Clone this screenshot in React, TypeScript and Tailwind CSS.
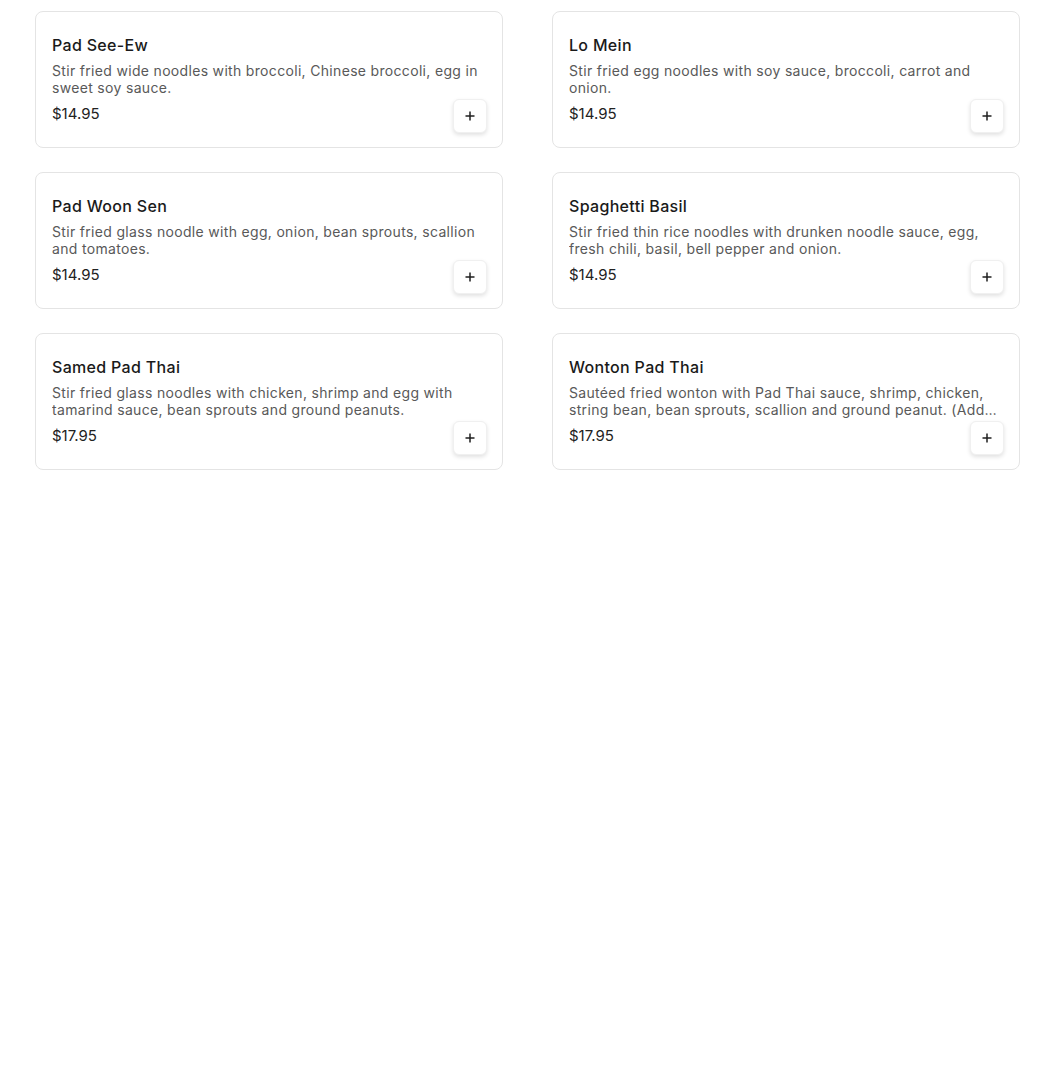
import React from "react";

const items = [
  { name: "Pad See-Ew", desc: "Stir fried wide noodles with broccoli, Chinese broccoli, egg in sweet soy sauce.", price: "$14.95" },
  { name: "Lo Mein", desc: "Stir fried egg noodles with soy sauce, broccoli, carrot and onion.", price: "$14.95" },
  { name: "Pad Woon Sen", desc: "Stir fried glass noodle with egg, onion, bean sprouts, scallion and tomatoes.", price: "$14.95" },
  { name: "Spaghetti Basil", desc: "Stir fried thin rice noodles with drunken noodle sauce, egg, fresh chili, basil, bell pepper and onion.", price: "$14.95" },
  { name: "Samed Pad Thai", desc: "Stir fried glass noodles with chicken, shrimp and egg with tamarind sauce, bean sprouts and ground peanuts.", price: "$17.95" },
  { name: "Wonton Pad Thai", desc: "Sautéed fried wonton with Pad Thai sauce, shrimp, chicken, string bean, bean sprouts, scallion and ground peanut. (Add Egg Extra)", price: "$17.95" },
];

function PlusIcon() {
  return (
    <svg width="12" height="12" viewBox="0 0 12 12" fill="none">
      <path d="M6 1.5v9M1.5 6h9" stroke="#1f1f1f" strokeWidth="1.5" strokeLinecap="butt" />
    </svg>
  );
}

export default function App() {
  return (
    <div className="min-h-[1083px] bg-white tracking-[0.02em]" style={{ fontFamily: "Inter, 'Open Sans', sans-serif" }}>
      <div className="ml-[35px] pt-[11px] w-[985px] grid grid-cols-2 gap-x-[49px] gap-y-[24px]">
        {items.map((it) => (
          <div key={it.name} className="border border-[#e4e4e4] rounded-lg pt-[21px] pl-4 pr-[15px] pb-[14px] bg-white">
            <div className="text-base leading-6 font-medium text-[#1a1a1a]">{it.name}</div>
            <div className="mt-[5px] min-h-[34px] text-sm leading-[17px] text-[#595959] line-clamp-2">{it.desc}</div>
            <div className="mt-[3px] flex justify-between items-start">
              <div className="mt-[3px] text-[15px] leading-6 text-[#222222] tracking-normal">{it.price}</div>
              <button className="w-[34px] h-[34px] flex items-center justify-center rounded-md bg-white border border-[#f0f0f0] shadow-[0_2px_4px_rgba(0,0,0,0.12)]">
                <PlusIcon />
              </button>
            </div>
          </div>
        ))}
      </div>
    </div>
  );
}
